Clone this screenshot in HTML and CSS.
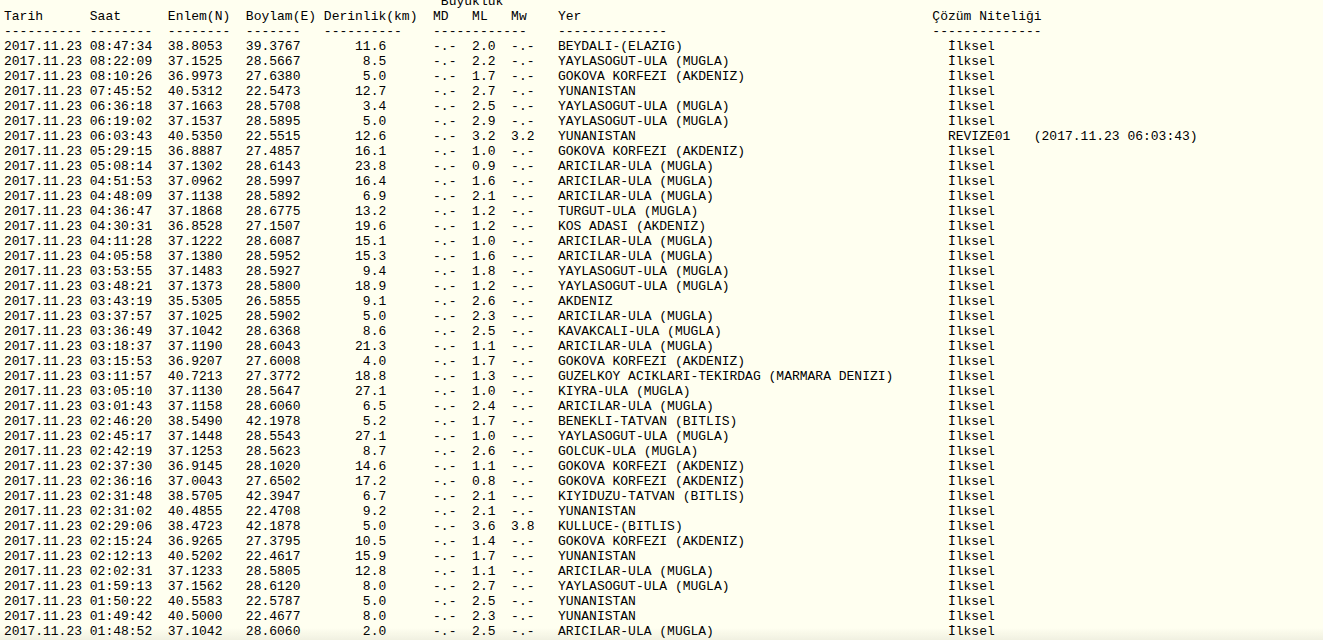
FILE: index.html
```html
<!DOCTYPE html>
<html lang="tr">
<head>
<meta charset="utf-8">
<title>Son Depremler</title>
<link rel="stylesheet" href="styles.css">
</head>
<body>
<main class="viewport">
<pre class="listing">                                                        Büyüklük
Tarih      Saat      Enlem(N)  Boylam(E) Derinlik(km)  MD   ML   Mw    Yer                                             Çözüm Niteliği
---------- --------  --------  -------   ----------    ------------    --------------                                  --------------
2017.11.23 08:47:34  38.8053   39.3767       11.6      -.-  2.0  -.-   BEYDALI-(ELAZIG)                                  İlksel
2017.11.23 08:22:09  37.1525   28.5667        8.5      -.-  2.2  -.-   YAYLASOGUT-ULA (MUGLA)                            İlksel
2017.11.23 08:10:26  36.9973   27.6380        5.0      -.-  1.7  -.-   GOKOVA KORFEZI (AKDENIZ)                          İlksel
2017.11.23 07:45:52  40.5312   22.5473       12.7      -.-  2.7  -.-   YUNANISTAN                                        İlksel
2017.11.23 06:36:18  37.1663   28.5708        3.4      -.-  2.5  -.-   YAYLASOGUT-ULA (MUGLA)                            İlksel
2017.11.23 06:19:02  37.1537   28.5895        5.0      -.-  2.9  -.-   YAYLASOGUT-ULA (MUGLA)                            İlksel
2017.11.23 06:03:43  40.5350   22.5515       12.6      -.-  3.2  3.2   YUNANISTAN                                        REVIZE01   (2017.11.23 06:03:43)
2017.11.23 05:29:15  36.8887   27.4857       16.1      -.-  1.0  -.-   GOKOVA KORFEZI (AKDENIZ)                          İlksel
2017.11.23 05:08:14  37.1302   28.6143       23.8      -.-  0.9  -.-   ARICILAR-ULA (MUGLA)                              İlksel
2017.11.23 04:51:53  37.0962   28.5997       16.4      -.-  1.6  -.-   ARICILAR-ULA (MUGLA)                              İlksel
2017.11.23 04:48:09  37.1138   28.5892        6.9      -.-  2.1  -.-   ARICILAR-ULA (MUGLA)                              İlksel
2017.11.23 04:36:47  37.1868   28.6775       13.2      -.-  1.2  -.-   TURGUT-ULA (MUGLA)                                İlksel
2017.11.23 04:30:31  36.8528   27.1507       19.6      -.-  1.2  -.-   KOS ADASI (AKDENIZ)                               İlksel
2017.11.23 04:11:28  37.1222   28.6087       15.1      -.-  1.0  -.-   ARICILAR-ULA (MUGLA)                              İlksel
2017.11.23 04:05:58  37.1380   28.5952       15.3      -.-  1.6  -.-   ARICILAR-ULA (MUGLA)                              İlksel
2017.11.23 03:53:55  37.1483   28.5927        9.4      -.-  1.8  -.-   YAYLASOGUT-ULA (MUGLA)                            İlksel
2017.11.23 03:48:21  37.1373   28.5800       18.9      -.-  1.2  -.-   YAYLASOGUT-ULA (MUGLA)                            İlksel
2017.11.23 03:43:19  35.5305   26.5855        9.1      -.-  2.6  -.-   AKDENIZ                                           İlksel
2017.11.23 03:37:57  37.1025   28.5902        5.0      -.-  2.3  -.-   ARICILAR-ULA (MUGLA)                              İlksel
2017.11.23 03:36:49  37.1042   28.6368        8.6      -.-  2.5  -.-   KAVAKCALI-ULA (MUGLA)                             İlksel
2017.11.23 03:18:37  37.1190   28.6043       21.3      -.-  1.1  -.-   ARICILAR-ULA (MUGLA)                              İlksel
2017.11.23 03:15:53  36.9207   27.6008        4.0      -.-  1.7  -.-   GOKOVA KORFEZI (AKDENIZ)                          İlksel
2017.11.23 03:11:57  40.7213   27.3772       18.8      -.-  1.3  -.-   GUZELKOY ACIKLARI-TEKIRDAG (MARMARA DENIZI)       İlksel
2017.11.23 03:05:10  37.1130   28.5647       27.1      -.-  1.0  -.-   KIYRA-ULA (MUGLA)                                 İlksel
2017.11.23 03:01:43  37.1158   28.6060        6.5      -.-  2.4  -.-   ARICILAR-ULA (MUGLA)                              İlksel
2017.11.23 02:46:20  38.5490   42.1978        5.2      -.-  1.7  -.-   BENEKLI-TATVAN (BITLIS)                           İlksel
2017.11.23 02:45:17  37.1448   28.5543       27.1      -.-  1.0  -.-   YAYLASOGUT-ULA (MUGLA)                            İlksel
2017.11.23 02:42:19  37.1253   28.5623        8.7      -.-  2.6  -.-   GOLCUK-ULA (MUGLA)                                İlksel
2017.11.23 02:37:30  36.9145   28.1020       14.6      -.-  1.1  -.-   GOKOVA KORFEZI (AKDENIZ)                          İlksel
2017.11.23 02:36:16  37.0043   27.6502       17.2      -.-  0.8  -.-   GOKOVA KORFEZI (AKDENIZ)                          İlksel
2017.11.23 02:31:48  38.5705   42.3947        6.7      -.-  2.1  -.-   KIYIDUZU-TATVAN (BITLIS)                          İlksel
2017.11.23 02:31:02  40.4855   22.4708        9.2      -.-  2.1  -.-   YUNANISTAN                                        İlksel
2017.11.23 02:29:06  38.4723   42.1878        5.0      -.-  3.6  3.8   KULLUCE-(BITLIS)                                  İlksel
2017.11.23 02:15:24  36.9265   27.3795       10.5      -.-  1.4  -.-   GOKOVA KORFEZI (AKDENIZ)                          İlksel
2017.11.23 02:12:13  40.5202   22.4617       15.9      -.-  1.7  -.-   YUNANISTAN                                        İlksel
2017.11.23 02:02:31  37.1233   28.5805       12.8      -.-  1.1  -.-   ARICILAR-ULA (MUGLA)                              İlksel
2017.11.23 01:59:13  37.1562   28.6120        8.0      -.-  2.7  -.-   YAYLASOGUT-ULA (MUGLA)                            İlksel
2017.11.23 01:50:22  40.5583   22.5787        5.0      -.-  2.5  -.-   YUNANISTAN                                        İlksel
2017.11.23 01:49:42  40.5000   22.4677        8.0      -.-  2.3  -.-   YUNANISTAN                                        İlksel
2017.11.23 01:48:52  37.1042   28.6060        2.0      -.-  2.5  -.-   ARICILAR-ULA (MUGLA)                              İlksel</pre>
</main>
</body>
</html>
```
FILE: styles.css
```css
html, body {
  margin: 0;
  padding: 0;
  height: 100%;
  overflow: hidden;
  background: #fffff0;
}

.viewport {
  height: 640px;
  overflow: hidden;
  padding-left: 4px;
}

.listing {
  margin: -6px 0 0;
  font-family: "Liberation Mono", "Courier New", monospace;
  font-size: 13px;
  line-height: 15px;
  color: #000;
}

.viewport::after {
  content: "";
  position: fixed;
  left: 0;
  right: 0;
  bottom: 0;
  height: 12px;
  background: linear-gradient(to bottom, rgba(90, 90, 70, 0), rgba(90, 90, 70, 0.09));
  pointer-events: none;
}
```
